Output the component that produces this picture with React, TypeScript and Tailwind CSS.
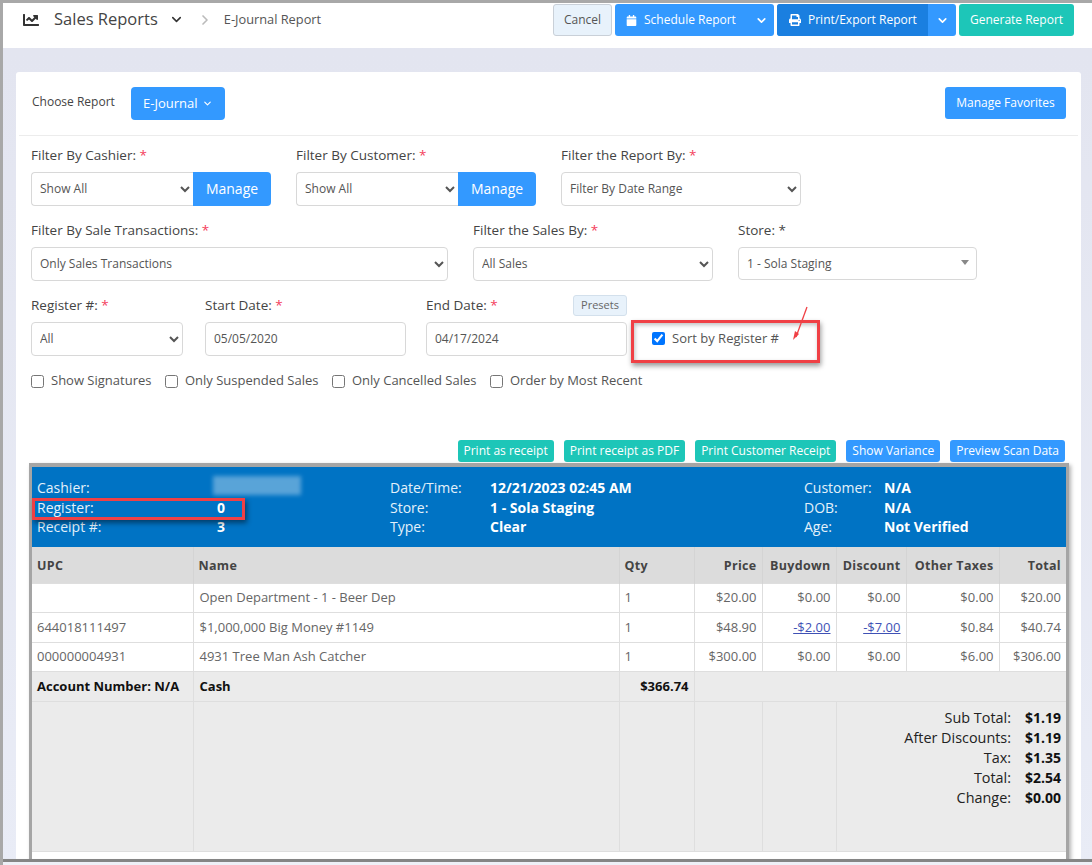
import { ChevronDown, ChevronRight } from "lucide-react";
import { FaCalendar, FaChartLine, FaPrint } from "react-icons/fa";

const Req = () => <span className="text-[#f4405c]"> *</span>;

const selectCls =
  "h-[34px] rounded-[4px] border border-[#d8d8d8] bg-white pb-[2px] pl-[4px] pr-[2px] text-[12px] text-[#555]";
const inputCls =
  "h-[34px] w-full rounded-[4px] border border-[#d8d8d8] bg-white px-[8px] pb-[2px] text-[12px] text-[#555] outline-none";

function Label({ children, req = true }: { children: React.ReactNode; req?: boolean }) {
  return (
    <div className="mb-[7px] h-[18px] text-[13.5px] leading-[16px] text-[#444]">
      {children}
      {req ? <Req /> : " *"}
    </div>
  );
}

function SelectField({ label, value, width }: { label: string; value: string; width: string }) {
  return (
    <div className={width}>
      <Label>{label}</Label>
      <select className={`${selectCls} w-full`} defaultValue={value}>
        <option>{value}</option>
      </select>
    </div>
  );
}

function ManageField({ label }: { label: string }) {
  return (
    <div className="w-[240px]">
      <Label>{label}</Label>
      <div className="flex">
        <select className={`${selectCls} w-[162px] rounded-r-none border-r-0`} defaultValue="Show All">
          <option>Show All</option>
        </select>
        <button className="h-[34px] flex-1 rounded-r-[4px] bg-[#3399ff] pb-[2px] text-[14px] text-white">Manage</button>
      </div>
    </div>
  );
}

function Check({ label, checked }: { label: string; checked?: boolean }) {
  return (
    <label className="flex items-center gap-[7px] text-[13px] text-[#555]">
      <input type="checkbox" defaultChecked={checked} className="m-0 size-[13px] accent-[#0075ff]" />
      {label}
    </label>
  );
}

function SmallBtn({ label, teal }: { label: string; teal?: boolean }) {
  return (
    <button
      className={`h-[22px] whitespace-nowrap rounded-[3px] px-[6px] text-[12px] text-white ${
        teal ? "bg-[#1dc6b8]" : "bg-[#3399ff]"
      }`}
    >
      {label}
    </button>
  );
}

const headInfo = [
  { cols: "w-[358px] pl-[5px] grid-cols-[180px_1fr]", rows: [["Cashier:", ""], ["Register:", "0"], ["Receipt #:", "3"]] },
  { cols: "w-[414px] grid-cols-[100px_1fr]", rows: [["Date/Time:", "12/21/2023 02:45 AM"], ["Store:", "1 - Sola Staging"], ["Type:", "Clear"]] },
  { cols: "flex-1 grid-cols-[80px_1fr]", rows: [["Customer:", "N/A"], ["DOB:", "N/A"], ["Age:", "Not Verified"]] },
];

const items = [
  { upc: "", name: "Open Department - 1 - Beer Dep", qty: "1", price: "$20.00", buy: "$0.00", disc: "$0.00", tax: "$0.00", total: "$20.00", h: "h-[29px]" },
  { upc: "644018111497", name: "$1,000,000 Big Money #1149", qty: "1", price: "$48.90", buy: "-$2.00", disc: "-$7.00", tax: "$0.84", total: "$40.74", h: "h-[30px]" },
  { upc: "000000004931", name: "4931 Tree Man Ash Catcher", qty: "1", price: "$300.00", buy: "$0.00", disc: "$0.00", tax: "$6.00", total: "$306.00", h: "h-[29px]" },
];

const totals = [
  ["Sub Total:", "$1.19"],
  ["After Discounts:", "$1.19"],
  ["Tax:", "$1.35"],
  ["Total:", "$2.54"],
  ["Change:", "$0.00"],
];

const th = "border-r border-[#d4d4d4] px-[5px] pt-[3px] text-[12.5px] font-bold text-[#444] tracking-[0.3px]";
const td = "border border-[#dedede] px-[5px] pt-[1px] text-[13px] text-[#666]";
const money = (v: string) =>
  v.startsWith("-") ? <a className="text-[#3f51b5] underline">{v}</a> : v;

export default function App() {
  return (
    <div className="relative h-[865px] w-[1092px] overflow-hidden border-l-[3px] border-t-[3px] border-[#a8a8a8] bg-[#e9ecf6] font-['Open_Sans',sans-serif]">
      {/* top bar */}
      <div className="flex h-[45px] bg-white">
        <div className="flex h-[33px] items-center">
          <FaChartLine className="ml-[20px] size-[16px] text-[#333]" />
          <span className="ml-[15px] text-[16.5px] text-[#444]">Sales Reports</span>
          <ChevronDown className="ml-[11px] size-[15px] text-[#333]" strokeWidth={2.5} />
          <ChevronRight className="ml-[13px] size-[16px] text-[#bbb]" strokeWidth={2.5} />
          <span className="ml-[11px] mt-[1px] text-[12.8px] text-[#555]">E-Journal Report</span>
        </div>
        <div className="ml-auto mr-[18px] mt-[1px] flex h-[32px] gap-[3px] text-[12px] text-white">
          <button className="w-[59px] rounded-[3px] border border-[#c9d0d8] bg-[#e8f2fb] text-[#555]">Cancel</button>
          <div className="flex w-[159px] overflow-hidden rounded-[3px] bg-[#3399ff]">
            <span className="flex flex-1 items-center gap-[7px] pl-[11px]">
              <FaCalendar className="size-[11px]" /> Schedule Report
            </span>
            <span className="flex w-[26px] items-center justify-center">
              <ChevronDown className="size-[13px]" strokeWidth={3} />
            </span>
          </div>
          <div className="flex w-[179px] overflow-hidden rounded-[3px] bg-[#3399ff]">
            <span className="flex flex-1 items-center gap-[7px] bg-[#1a7fe0] pl-[12px]">
              <FaPrint className="size-[12px]" /> Print/Export Report
            </span>
            <span className="flex w-[28px] items-center justify-center">
              <ChevronDown className="size-[13px]" strokeWidth={3} />
            </span>
          </div>
          <button className="w-[115px] rounded-[3px] bg-[#1dc6b8]">Generate Report</button>
        </div>
      </div>

      {/* page */}
      <div className="bg-gradient-to-b from-[#e3e5f0] to-[#e9ecf6] pl-[13px] pr-[11px] pt-[24px]">
        <div className="rounded-[3px] bg-white">
          <div className="mx-[3px] flex h-[64px] items-start border-b border-[#ececec] pl-[13px] pr-[12px] pt-[15px]">
            <span className="mt-[6px] text-[12px] text-[#444]">Choose Report</span>
            <button className="ml-[16px] flex h-[33px] w-[94px] items-center justify-center gap-[4px] rounded-[4px] bg-[#3399ff] text-[13px] text-white">
              E-Journal <ChevronDown className="size-[11px]" strokeWidth={2.5} />
            </button>
            <button className="ml-auto h-[32px] w-[121px] rounded-[3px] bg-[#3399ff] text-[12px] text-white">Manage Favorites</button>
          </div>

          <div className="px-[15px] pt-[11px]">
            <div className="flex gap-[25px]">
              <ManageField label="Filter By Cashier:" />
              <ManageField label="Filter By Customer:" />
              <SelectField label="Filter the Report By:" value="Filter By Date Range" width="w-[240px]" />
            </div>

            <div className="mt-[16px] flex gap-[25px]">
              <SelectField label="Filter By Sale Transactions:" value="Only Sales Transactions" width="w-[417px]" />
              <SelectField label="Filter the Sales By:" value="All Sales" width="w-[240px]" />
              <div className="w-[239px]">
                <Label req={false}>Store:</Label>
                <div className="flex h-[33px] items-center justify-between rounded-[4px] border border-[#d8d8d8] pl-[8px] pr-[7px] text-[12px] text-[#555]">
                  1 - Sola Staging
                  <span className="mb-[2px] border-x-[4px] border-t-[5px] border-x-transparent border-t-[#888]" />
                </div>
              </div>
            </div>

            <div className="mt-[16px] flex">
              <SelectField label="Register #:" value="All" width="w-[152px]" />
              <div className="ml-[22px] w-[201px]">
                <Label>Start Date:</Label>
                <input className={inputCls} readOnly value="05/05/2020" />
              </div>
              <div className="ml-[20px] w-[201px]">
                <div className="flex items-start justify-between">
                  <Label>End Date:</Label>
                  <button className="-mt-[2px] h-[21px] w-[54px] rounded-[3px] border border-[#d3e0ec] bg-[#e8f2fb] text-[11px] text-[#666]">Presets</button>
                </div>
                <input className={inputCls} readOnly value="04/17/2024" />
              </div>
              <div className="ml-[25px] flex items-end pb-[8px]">
                <Check label="Sort by Register #" checked />
              </div>
            </div>

            <div className="mt-[16px] flex h-[18px] gap-[13.5px]">
              <Check label="Show Signatures" />
              <Check label="Only Suspended Sales" />
              <Check label="Only Cancelled Sales" />
              <Check label="Order by Most Recent" />
            </div>

            <div className="mr-[1px] mt-[50px] flex justify-end gap-[10px]">
              <SmallBtn teal label="Print as receipt" />
              <SmallBtn teal label="Print receipt as PDF" />
              <SmallBtn teal label="Print Customer Receipt" />
              <SmallBtn label="Show Variance" />
              <SmallBtn label="Preview Scan Data" />
            </div>
          </div>

          {/* receipt */}
          <div className="relative ml-[13px] mr-[12px] mt-[1px] border-[3px] border-t-4 border-[#a5a5a5] bg-white shadow-[2px_2px_4px_rgba(0,0,0,0.3)]">
            <div className="flex h-[80px] items-start bg-[#0073c4] pt-[11px] text-[14px] leading-[19.5px] text-white">
              {headInfo.map((b, i) => (
                <div key={i} className={`grid ${b.cols}`}>
                  {b.rows.map(([k, v]) => (
                    <div key={k} className="contents">
                      <span className="text-[#e4f1fa]">{k}</span>
                      <span className="font-bold">{v}</span>
                    </div>
                  ))}
                </div>
              ))}
            </div>

            <table className="w-full table-fixed border-collapse">
              <colgroup>
                <col className="w-[161px]" />
                <col className="w-[426px]" />
                <col className="w-[75px]" />
                <col className="w-[68px]" />
                <col className="w-[74px]" />
                <col className="w-[70px]" />
                <col className="w-[93px]" />
                <col className="w-[67px]" />
              </colgroup>
              <thead>
                <tr className="h-[36px] bg-[#dcdcdc]">
                  <th className={`${th} text-left`}>UPC</th>
                  <th className={`${th} text-left`}>Name</th>
                  <th className={`${th} text-left`}>Qty</th>
                  <th className={`${th} text-right`}>Price</th>
                  <th className={`${th} text-right`}>Buydown</th>
                  <th className={`${th} text-right`}>Discount</th>
                  <th className={`${th} text-right`}>Other Taxes</th>
                  <th className={`${th} border-r-0 text-right`}>Total</th>
                </tr>
              </thead>
              <tbody>
                {items.map((r) => (
                  <tr key={r.name} className={r.h}>
                    <td className={`${td} border-l-0`}>{r.upc}</td>
                    <td className={`${td} pl-[6px]`}>{r.name}</td>
                    <td className={td}>{r.qty}</td>
                    <td className={`${td} text-right`}>{r.price}</td>
                    <td className={`${td} text-right`}>{money(r.buy)}</td>
                    <td className={`${td} text-right`}>{money(r.disc)}</td>
                    <td className={`${td} text-right`}>{r.tax}</td>
                    <td className={`${td} border-r-0 text-right`}>{r.total}</td>
                  </tr>
                ))}
                <tr className="h-[30px] bg-[#ebebeb] text-[13px] font-bold text-[#111]">
                  <td className="border border-l-0 border-[#dedede] px-[5px] pt-[2px]">Account Number: N/A</td>
                  <td className="border border-[#dedede] pl-[6px] pt-[2px]">Cash</td>
                  <td className="border border-[#dedede] px-[5px] pt-[2px] text-right">$366.74</td>
                  <td colSpan={5} className="border border-r-0 border-[#dedede]" />
                </tr>
                <tr className="h-[150px] bg-[#ebebeb]">
                  <td className="border border-l-0 border-[#dedede]" />
                  <td className="border border-[#dedede]" />
                  <td className="border border-[#dedede]" />
                  <td className="border border-[#dedede]" />
                  <td className="border border-[#dedede]" />
                  <td colSpan={3} className="border border-r-0 border-[#dedede] pr-[5px] pt-[6px] align-top">
                    <div className="grid grid-cols-[1fr_50px] text-right text-[14.4px] leading-[20px] text-[#222]">
                      {totals.map(([k, v]) => (
                        <div key={k} className="contents">
                          <span>{k}</span>
                          <span className="text-[14px] font-bold text-[#111]">{v}</span>
                        </div>
                      ))}
                    </div>
                  </td>
                </tr>
              </tbody>
            </table>
            <div className="h-[20px]" />

            {/* blurred cashier name */}
            <div className="absolute left-[181px] top-[9px] h-[19px] w-[88px] bg-white/35 blur-[2px]" />
            {/* annotation on register row */}
            <div className="absolute left-0 top-[31px] h-[22px] w-[213px] border-[3px] border-[#f04045] shadow-[2px_3px_5px_rgba(0,0,0,0.45)]" />
          </div>
        </div>
      </div>

      {/* annotation on sort checkbox */}
      <div className="absolute left-[628px] top-[317px] h-[43px] w-[189px] border-[3px] border-[#f04045] shadow-[1px_3px_5px_rgba(0,0,0,0.4),inset_1px_2px_4px_rgba(0,0,0,0.25)]" />
      <svg className="absolute left-[785px] top-[300px]" width="30" height="42" viewBox="0 0 30 42" fill="none">
        <path d="M19 4 L8 34" stroke="#f04045" strokeWidth="1.3" />
        <path d="M5 37 L7 28 L11 31 Z" fill="#f04045" />
      </svg>

      {/* screenshot frame, bottom edge */}
      <div className="absolute -left-[2px] right-0 top-[856px] h-[3px] bg-[#858585] shadow-[0_2px_3px_rgba(0,0,0,0.25)]" />
      <div className="absolute left-0 right-0 top-[859px] h-[4px] bg-[#eef0f7]" />
    </div>
  );
}
